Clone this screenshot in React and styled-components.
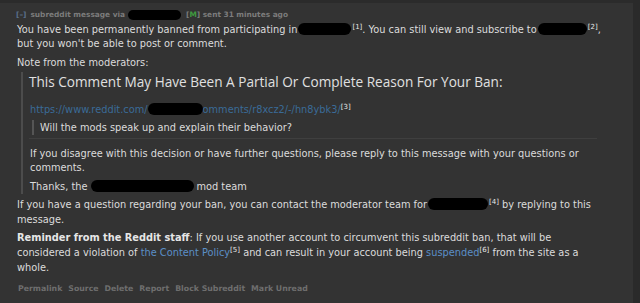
import React from "react";
import styled, { createGlobalStyle } from "styled-components";

const Global = createGlobalStyle`
  html, body { margin: 0; padding: 0; background: #2b2b2b; }
  body { font-family: "DejaVu Sans", Verdana, sans-serif; }
`;

const Page = styled.div`
  display: flex;
  height: 303px;
  overflow: hidden;
`;

const Panel = styled.div`
  flex: 1;
  margin-top: 3px;
  background: #333333;
  padding: 7px 27px 0 16px;
  color: #dcdcdc;
  font-size: 9.8px;
  line-height: 14px;
`;

const Rail = styled.div`
  width: 7px;
  background: #2a2a2a;
`;

const Header = styled.div`
  font-size: 7.4px;
  line-height: 10px;
  font-weight: bold;
  color: #7c7c7c;
  display: flex;
  align-items: center;
  white-space: nowrap;
`;

const Toggle = styled.span`
  color: #5a6f8a;
  margin-right: 4px;
`;

const Mod = styled.span`
  color: #7c7c7c;
  margin-left: 2px;
  b { color: #3f9a3f; }
`;

const Blob = styled.span`
  display: inline-block;
  width: ${(p) => p.$w}px;
  height: ${(p) => p.$h || 12}px;
  background: #000;
  border-radius: ${(p) => (p.$h || 12) / 2}px;
  vertical-align: ${(p) => p.$v || -2}px;
  margin: 0 ${(p) => p.$m || 0}px;
`;

const P = styled.p`
  margin: ${(p) => (p.$top === undefined ? 5 : p.$top)}px 0 0 1px;
  line-height: ${(p) => p.$lh || 14}px;
`;

const Sup = styled.sup`
  font-size: 7px;
  line-height: 0;
  vertical-align: 4px;
  color: #e8e8e8;
`;

const Quote = styled.div`
  margin: 2px 9px 0 5px;
  border-left: 2px solid #4c4c4c;
  padding: 0 0 0 6px;
`;

const Heading = styled.h1`
  margin: 0;
  font-family: "Open Sans", "Segoe UI", sans-serif;
  font-weight: normal;
  font-size: 13.6px;
  line-height: 19px;
  color: #e0e0e0;
`;

const Link = styled.a`
  color: ${(p) => (p.$dim ? "#3a6b98" : "#5b8fc7")};
  text-decoration: none;
`;

const Inner = styled.div`
  margin: 3px 0 0 3px;
  border-left: 2px solid #555;
  padding: 0 0 0 6px;
  line-height: 15px;
`;

const Rule = styled.hr`
  border: 0;
  border-top: 1px solid #3f3f3f;
  margin: 3px 0 0 0;
`;

const Strong = styled.strong`
  font-weight: bold;
  color: #e6e6e6;
`;

const Footer = styled.div`
  display: flex;
  gap: 6px;
  margin: 9px 0 0 2px;
  font-size: 7.8px;
  font-weight: bold;
  color: #6e6e6e;
  line-height: 10px;
`;

export default function App() {
  return (
    <>
      <Global />
      <Page>
        <Panel>
          <Header>
            <Toggle>[–]</Toggle>
            subreddit message via
            <Blob $w={53} $h={10} $m={3} $v={0} />
            <Mod>
              [<b>M</b>]
            </Mod>
            &nbsp;sent 31 minutes ago
          </Header>
          <P $top={3}>
            You have been permanently banned from participating in
            <Blob $w={53} $m={1} />
            <Sup>[1]</Sup>. You can still view and subscribe to
            <Blob $w={49} $m={1} />
            <Sup>[2]</Sup>, but you won't be able to post or comment.
          </P>
          <P $top={5}>Note from the moderators:</P>
          <Quote>
            <Heading>
              This Comment May Have Been A Partial Or Complete Reason For Your
              Ban:
            </Heading>
            <P $top={12}>
              <Link $dim href="#">
                https://www.reddit.com/
                <Blob $w={55} />
                omments/r8xcz2/-/hn8ybk3/
              </Link>
              <Sup>[3]</Sup>
            </P>
            <Inner>Will the mods speak up and explain their behavior?</Inner>
            <Rule />
            <P $top={8}>
              If you disagree with this decision or have further questions,
              please reply to this message with your questions or comments.
            </P>
            <P $top={5}>
              Thanks, the
              <Blob $w={103} $m={3} />
              mod team
            </P>
          </Quote>
          <P $top={3} $lh={15}>
            If you have a question regarding your ban, you can contact the
            moderator team for
            <Blob $w={60} $m={1} />
            <Sup>[4]</Sup> by replying to this message.
          </P>
          <P $top={3} $lh={15}>
            <Strong>Reminder from the Reddit staff</Strong>: If you use another
            account to circumvent this subreddit ban, that will be considered a
            violation of <Link href="#">the Content Policy</Link>
            <Sup>[5]</Sup> and can result in your account being{" "}
            <Link href="#">suspended</Link>
            <Sup>[6]</Sup> from the site as a whole.
          </P>
          <Footer>
            <span>Permalink</span>
            <span>Source</span>
            <span>Delete</span>
            <span>Report</span>
            <span>Block Subreddit</span>
            <span>Mark Unread</span>
          </Footer>
        </Panel>
        <Rail />
      </Page>
    </>
  );
}
